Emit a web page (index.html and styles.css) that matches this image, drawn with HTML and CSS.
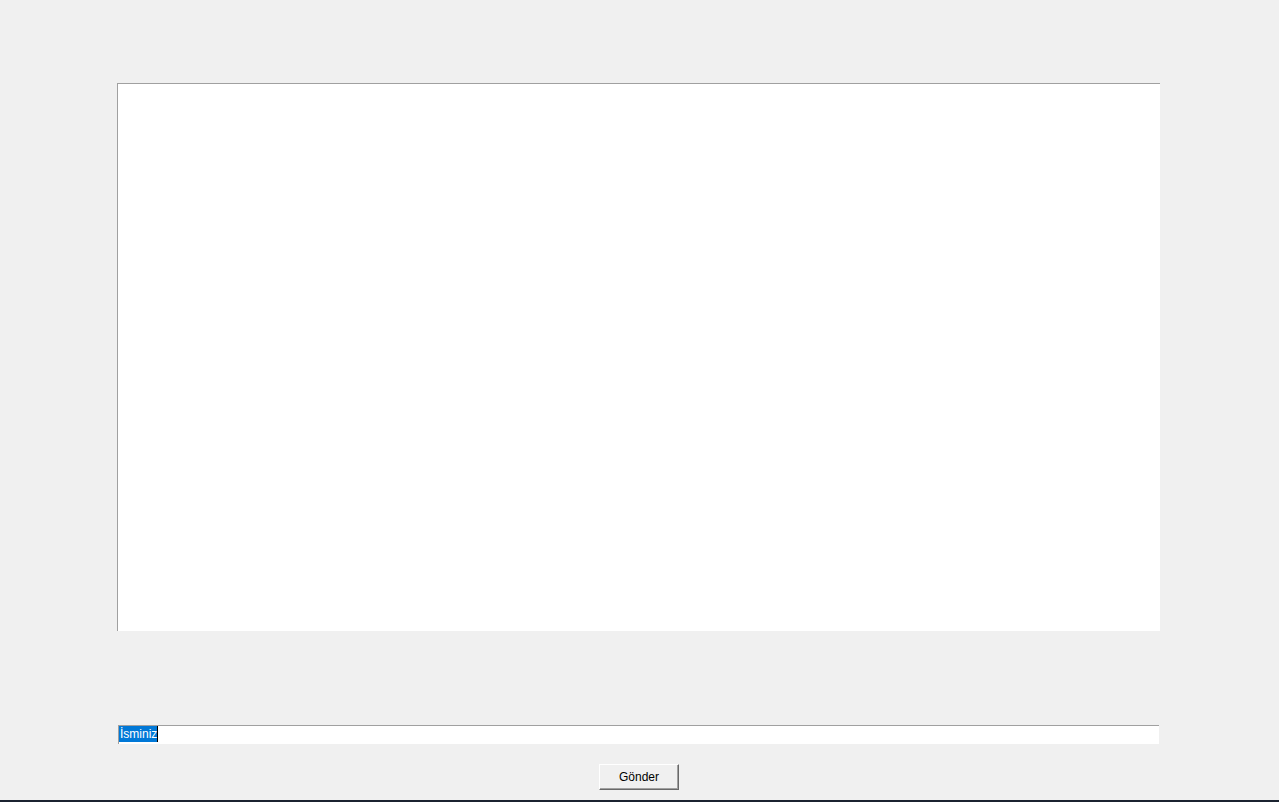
FILE: index.html
```html
<!DOCTYPE html>
<html lang="tr">
<head>
<meta charset="utf-8">
<title>Sohbet</title>
<link rel="stylesheet" href="styles.css">
</head>
<body>
<div class="window">
  <div class="chat-log"></div>
  <div class="entry"><span class="selected">İsminiz</span><span class="caret"></span></div>
  <div class="actions"><button class="send-btn">Gönder</button></div>
</div>
<div class="taskbar-edge"></div>
</body>
</html>
```
FILE: styles.css
```css
html, body {
  margin: 0;
  padding: 0;
  background: #f0f0f0;
  font-family: "Liberation Sans", Arial, sans-serif;
  font-size: 12px;
  color: #000;
}
body {
  width: 1279px;
  height: 802px;
  overflow: hidden;
  display: flex;
  flex-direction: column;
}
.window {
  flex: 1;
  display: flex;
  flex-direction: column;
  padding-top: 83px;
}
.chat-log {
  margin-left: 117px;
  width: 1043px;
  height: 548px;
  box-sizing: border-box;
  background: #fff;
  border-top: 1px solid #a0a0a0;
  border-left: 1px solid #a0a0a0;
}
.entry {
  margin-top: 94px;
  margin-left: 118px;
  width: 1041px;
  height: 19px;
  box-sizing: border-box;
  background: #fff;
  border-top: 1px solid #a0a0a0;
  border-left: 1px solid #a0a0a0;
  display: flex;
  align-items: flex-start;
}
.selected {
  background: #0078d7;
  color: #fff;
  height: 16px;
  line-height: 17px;
  padding-left: 1px;
}
.caret {
  width: 1px;
  height: 16px;
  background: #000;
}
.actions {
  margin-top: 20px;
  display: flex;
  justify-content: center;
  padding-right: 1px;
}
.send-btn {
  width: 80px;
  height: 26px;
  box-sizing: border-box;
  margin: 0;
  padding: 0;
  font-family: "Liberation Sans", Arial, sans-serif;
  font-size: 12px;
  color: #000;
  background: #f0f0f0;
  border: 1px solid;
  border-color: #ffffff #696969 #696969 #ffffff;
  box-shadow: inset -1px -1px 0 #a0a0a0;
  border-radius: 0;
}
.taskbar-edge {
  height: 2px;
  background: #1b2330;
}
```
